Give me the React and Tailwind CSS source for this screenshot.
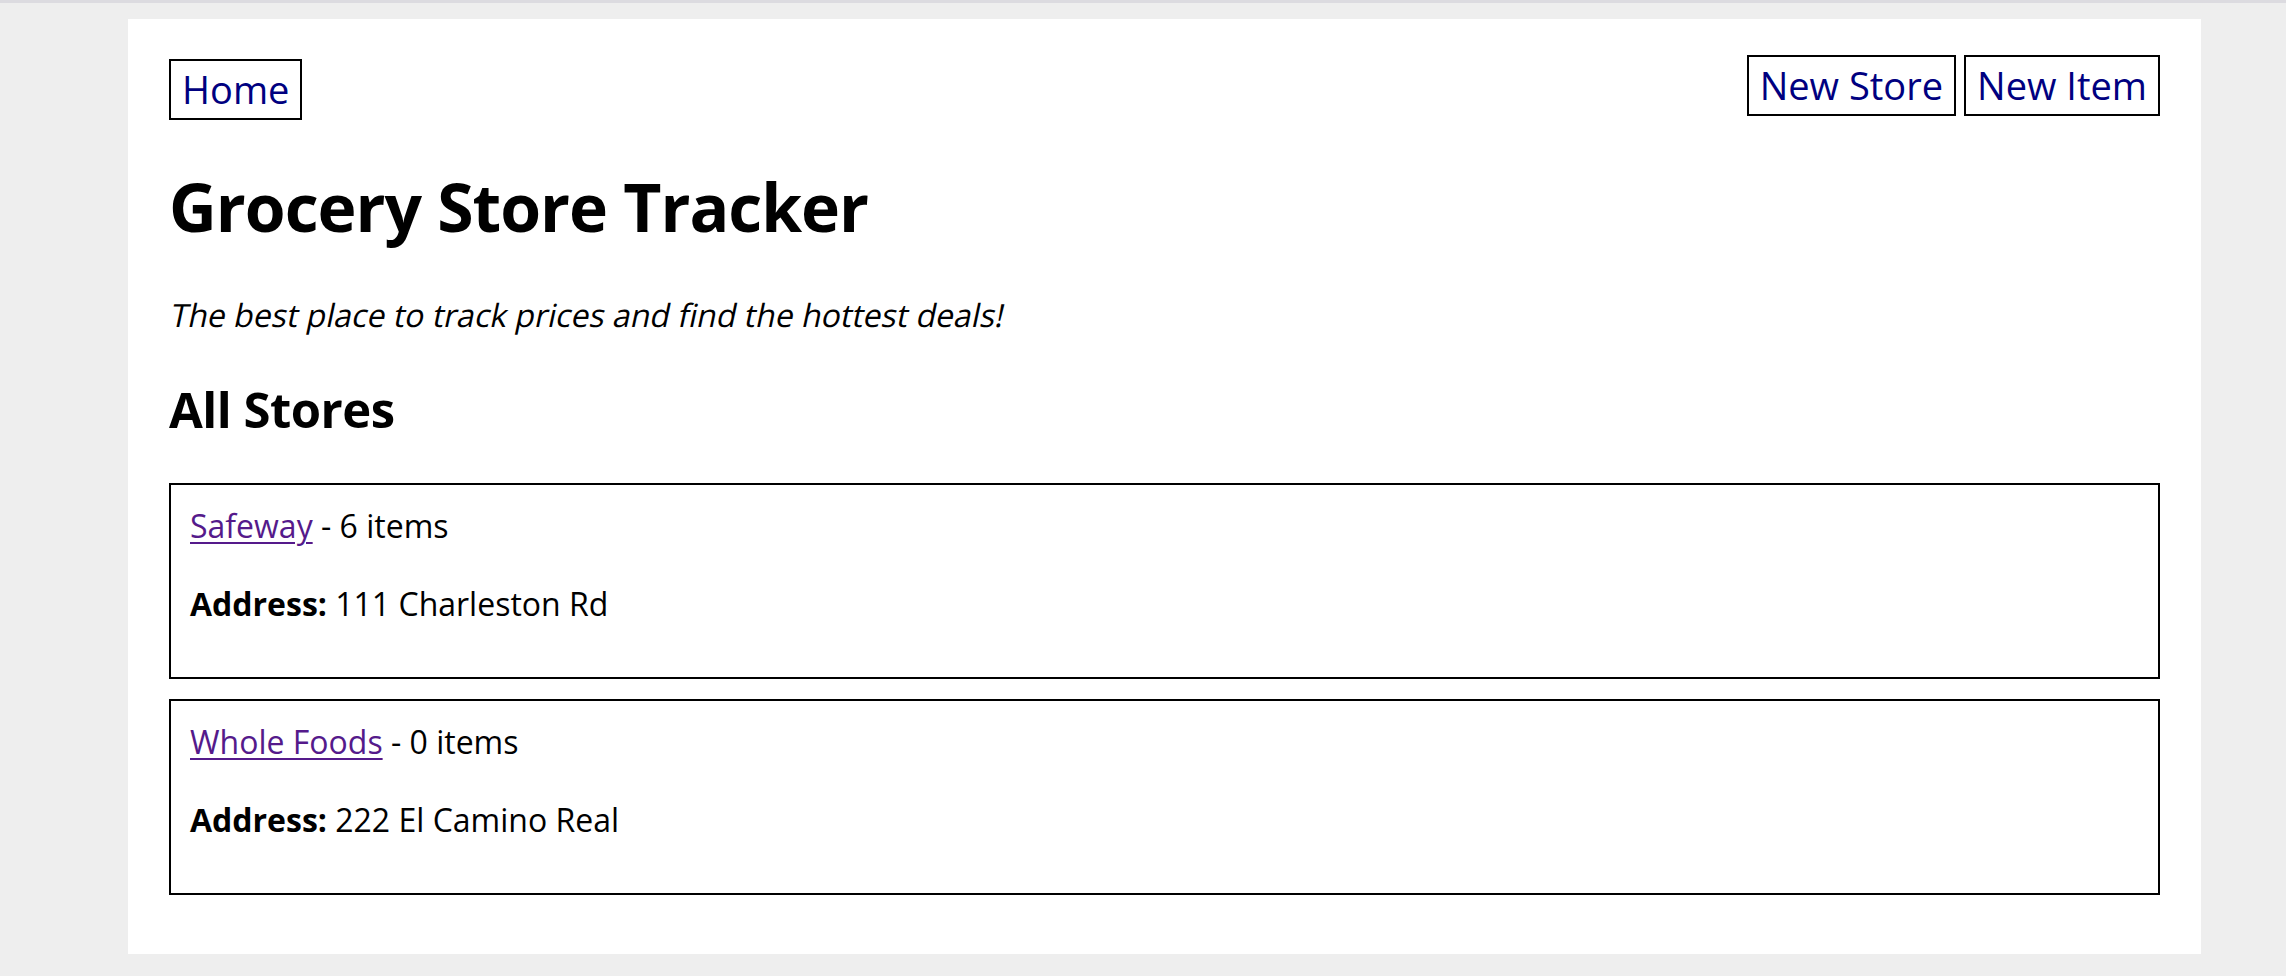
// Grocery store tracker home page
const stores = [
  { name: "Safeway", items: 6, address: "111 Charleston Rd" },
  { name: "Whole Foods", items: 0, address: "222 El Camino Real" },
];

function NavLink({ children, className = "" }) {
  return (
    <a
      href="#"
      className={`flex h-[61px] items-center border-2 border-black px-[11px] text-[38px] leading-[57px] text-[#000080] ${className}`}
    >
      {children}
    </a>
  );
}

function StoreCard({ store }) {
  return (
    <div className="h-[196px] border-2 border-black px-[19px] pt-[19px] text-[32px] leading-[44px]">
      <p>
        <a href="#" className="text-[#551a8b] underline decoration-2 underline-offset-[4px]">
          {store.name}
        </a>{" "}
        - {store.items} items
      </p>
      <p className="mt-[34px]">
        <span className="font-bold">Address:</span> {store.address}
      </p>
    </div>
  );
}

export default function App() {
  return (
    <div
      className="min-h-[976px] w-full border-t-[3px] border-[#dcdbe0] bg-[#eeeeee] pt-[16px] text-black"
      style={{ fontFamily: '"Open Sans", "Noto Sans", sans-serif' }}
    >
      <div className="ml-[128px] h-[935px] w-[2073px] bg-white px-[41px]">
        <nav className="flex items-start justify-between pt-[36px]">
          <NavLink className="mt-[4px]">Home</NavLink>
          <div className="flex gap-[8px]">
            <NavLink>New Store</NavLink>
            <NavLink className="px-[9px]">New Item</NavLink>
          </div>
        </nav>

        <h1 className="mt-[41px] text-[66px] font-bold leading-[90px] tracking-[-1px]">
          Grocery Store Tracker
        </h1>
        {/* regular face slanted, as the page shows it */}
        <p className="mt-[42px] text-[32px] leading-[44px]">
          <span className="inline-block origin-[0_78%] -skew-x-12">
            The best place to track prices and find the hottest deals!
          </span>
        </p>

        <h2 className="mt-[38px] text-[49px] font-bold leading-[68px] tracking-[-0.5px]">All Stores</h2>

        <div className="mt-[40px] flex flex-col gap-[20px]">
          {stores.map((store) => (
            <StoreCard key={store.name} store={store} />
          ))}
        </div>
      </div>
    </div>
  );
}
